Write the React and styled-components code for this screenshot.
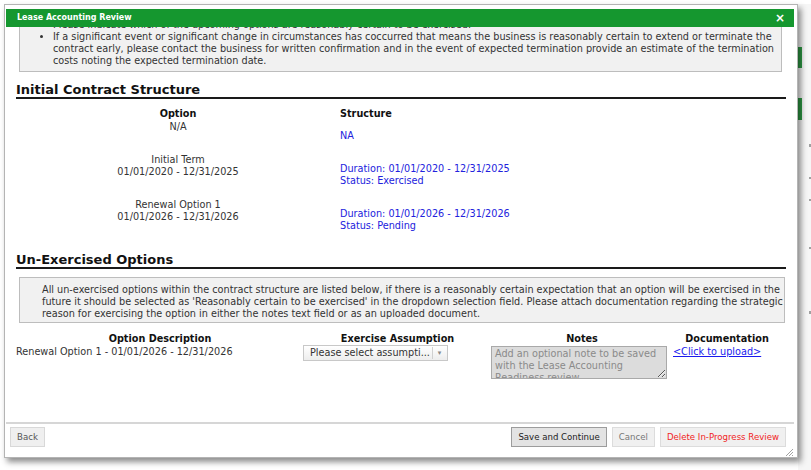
import React from "react";
import styled, { createGlobalStyle } from "styled-components";

const GlobalStyle = createGlobalStyle`
  html, body {
    margin: 0;
    padding: 0;
    background: #ffffff;
  }
  body {
    font-family: "DejaVu Sans", Verdana, sans-serif;
    font-size: 9.7px;
    line-height: 12px;
    color: #333333;
  }
`;

const contractRows = [
  { option: ["N/A"], structure: ["NA"] },
  {
    option: ["Initial Term", "01/01/2020 - 12/31/2025"],
    structure: ["Duration: 01/01/2020 - 12/31/2025", "Status: Exercised"],
  },
  {
    option: ["Renewal Option 1", "01/01/2026 - 12/31/2026"],
    structure: ["Duration: 01/01/2026 - 12/31/2026", "Status: Pending"],
  },
];

const App = () => {
  return (
    <Page>
      <GlobalStyle />
      <Dialog>
        <TitleBar>
          <TitleText>Lease Accounting Review</TitleText>
          <CloseButton>×</CloseButton>
        </TitleBar>

        <Content>
          <Scroller>
            <InfoBox>
              <BulletList>
                <li>Please indicate which of the upcoming options are reasonably certain to be exercised.</li>
                <li>
                  If a significant event or significant change in circumstances has coccurred that means the business is reasonably certain to extend or terminate the
                  <br />
                  contract early, please contact the business for written confirmation and in the event of expected termination provide an estimate of the termination
                  <br />
                  costs noting the expected termination date.
                </li>
              </BulletList>
            </InfoBox>

            <SectionHeader top={10}>Initial Contract Structure</SectionHeader>
            <StructureGrid>
              <HeadCell center>Option</HeadCell>
              <HeadCell>Structure</HeadCell>
              {contractRows.map((row, i) => (
                <React.Fragment key={i}>
                  <OptionCell>
                    {row.option.map((line) => (
                      <div key={line}>{line}</div>
                    ))}
                  </OptionCell>
                  <StructureCell>
                    {row.structure.map((line) => (
                      <div key={line}>{line}</div>
                    ))}
                  </StructureCell>
                </React.Fragment>
              ))}
            </StructureGrid>

            <SectionHeader top={9}>Un-Exercised Options</SectionHeader>
            <InfoBox plain>
              All un-exercised options within the contract structure are listed below, if there is a reasonably certain expectation that an option will be exercised in the
              <br />
              future it should be selected as 'Reasonably certain to be exercised' in the dropdown selection field. Please attach documentation regarding the strategic
              <br />
              reason for exercising the option in either the notes text field or as an uploaded document.
            </InfoBox>

            <OptionsGrid>
              <HeadCell center>Option Description</HeadCell>
              <HeadCell center>Exercise Assumption</HeadCell>
              <HeadCell center>Notes</HeadCell>
              <HeadCell center>Documentation</HeadCell>
              <Cell>Renewal Option 1 - 01/01/2026 - 12/31/2026</Cell>
              <Cell>
                <SelectBox>
                  <SelectText>Please select assumpti...</SelectText>
                  <SelectArrow>▾</SelectArrow>
                </SelectBox>
              </Cell>
              <Cell>
                <NotesArea
                  readOnly
                  placeholder="Add an optional note to be saved with the Lease Accounting Readiness review"
                />
              </Cell>
              <Cell>
                <UploadLink href="#">&lt;Click to upload&gt;</UploadLink>
              </Cell>
            </OptionsGrid>
          </Scroller>
        </Content>

        <Footer>
          <Button>Back</Button>
          <Spacer />
          <Button variant="primary">Save and Continue</Button>
          <Button variant="muted">Cancel</Button>
          <Button variant="danger">Delete In-Progress Review</Button>
          <Grip viewBox="0 0 8 8">
            <path d="M8 1 L1 8 M8 4 L4 8 M8 7 L7 8" stroke="#8a8a8a" strokeWidth="0.8" />
          </Grip>
        </Footer>
      </Dialog>

      <Backdrop>
        <BackMark green h={21} top={43} />
        <BackMark green h={22} top={30} />
        <BackMark h={3} top={24} />
        <BackMark h={2} top={30} />
        <BackMark h={2} top={20} />
        <BackMark h={2} top={46} />
        <BackMark h={3} top={62} />
      </Backdrop>
    </Page>
  );
};

const Page = styled.div`
  display: flex;
  align-items: flex-start;
  width: 811px;
  height: 470px;
  overflow: hidden;
  padding: 4px 0 0 4px;
  box-sizing: border-box;
`;

const Dialog = styled.div`
  position: relative;
  width: 794px;
  height: 454px;
  flex: none;
  box-sizing: border-box;
  display: flex;
  flex-direction: column;
  background: #ffffff;
  border: 1px solid #b4b4b4;
  padding: 4px 3px 0 1px;
  box-shadow: 3px 4px 6px rgba(0, 0, 0, 0.45);
  z-index: 1;
`;

const TitleBar = styled.div`
  height: 18px;
  flex: none;
  display: flex;
  align-items: center;
  justify-content: space-between;
  padding: 0 9px 0 11px;
  background: #15972f;
  color: #ffffff;
  position: relative;
  z-index: 2;
`;

const TitleText = styled.span`
  font-size: 8px;
  font-weight: bold;
`;

const CloseButton = styled.span`
  font-size: 12px;
  font-weight: bold;
  line-height: 12px;
`;

const Content = styled.div`
  flex: 1;
  overflow: hidden;
  padding: 0 8px 0 10px;
`;

const Scroller = styled.div`
  margin-top: -14px;
`;

const InfoBox = styled.div`
  margin: ${(props) => (props.plain ? "8px 1px 0 3px" : "0 4px 0 3px")};
  border: 1px solid #bdbdbd;
  background: #f1f1f1;
  padding: ${(props) => (props.plain ? "6px 2px 2px 22px" : "5px 0 4px 0")};
  white-space: nowrap;
`;

const BulletList = styled.ul`
  margin: 0;
  padding-left: 33px;
  list-style: disc;
`;

const SectionHeader = styled.h2`
  margin: ${(props) => props.top}px 0 0 0;
  font-size: 13px;
  line-height: 15px;
  font-weight: bold;
  color: #111111;
  border-bottom: 2px solid #1a1a1a;
`;

const StructureGrid = styled.div`
  display: grid;
  grid-template-columns: 324px 1fr;
  margin-top: 9px;
  & > div:nth-child(n + 3) {
    margin-bottom: 11px;
  }
`;

const HeadCell = styled.div`
  font-weight: bold;
  color: #111111;
  text-align: ${(props) => (props.center ? "center" : "left")};
`;

const OptionCell = styled.div`
  text-align: center;
  margin-top: 1px;
`;

const StructureCell = styled.div`
  padding-top: 10px;
  color: #2222dd;
`;

const OptionsGrid = styled.div`
  display: grid;
  grid-template-columns: 288px 187px 182px 108px;
  margin-top: 10px;
`;

const Cell = styled.div`
  padding-top: 1px;
`;

const SelectBox = styled.div`
  width: 145px;
  height: 16px;
  box-sizing: border-box;
  display: flex;
  align-items: center;
  border: 1px solid #c8c8c8;
  background: linear-gradient(#ffffff, #ededed);
  margin-top: -1px;
  margin-left: -1px;
`;

const SelectText = styled.span`
  flex: 1;
  padding-left: 6px;
  color: #333333;
  white-space: nowrap;
  overflow: hidden;
`;

const SelectArrow = styled.span`
  width: 13px;
  height: 12px;
  border-left: 1px solid #d0d0d0;
  color: #888888;
  font-size: 7px;
  line-height: 12px;
  text-align: center;
  margin-right: 1px;
`;

const NotesArea = styled.textarea`
  display: block;
  width: 176px;
  height: 33px;
  box-sizing: border-box;
  margin: 0;
  padding: 1px 3px;
  border: 1px solid #a9a9a9;
  background: #dcdcdc;
  font-family: "DejaVu Sans", Verdana, sans-serif;
  font-size: 9.7px;
  line-height: 12px;
  color: #333333;
  overflow: hidden;
  &::placeholder {
    color: #8a8a8a;
  }
`;

const UploadLink = styled.a`
  color: #1a1aee;
  text-decoration: underline;
  white-space: nowrap;
`;

const Footer = styled.div`
  position: relative;
  flex: none;
  display: flex;
  align-items: center;
  gap: 5px;
  height: 35px;
  box-sizing: border-box;
  border-top: 2px solid #d6d6d6;
  padding: 3px 8px 10px 4px;
`;

const Spacer = styled.div`
  flex: 1;
`;

const buttonColors = {
  primary: { bg: "#e3e3e3", border: "#9c9c9c", color: "#222222" },
  muted: { bg: "#f0f0f0", border: "#dcdcdc", color: "#777777" },
  danger: { bg: "#f0f0f0", border: "#dcdcdc", color: "#f01e24" },
  default: { bg: "#efefef", border: "#d8d8d8", color: "#555555" },
};

const Button = styled.button`
  height: 20px;
  padding: 0 6px;
  font-family: "DejaVu Sans", Verdana, sans-serif;
  font-size: 8.6px;
  background: ${(props) => buttonColors[props.variant || "default"].bg};
  border: 1px solid ${(props) => buttonColors[props.variant || "default"].border};
  color: ${(props) => buttonColors[props.variant || "default"].color};
  border-radius: 0;
  cursor: pointer;
`;

const Grip = styled.svg`
  position: absolute;
  right: 1px;
  bottom: 1px;
  width: 8px;
  height: 8px;
`;

const Backdrop = styled.div`
  flex: 1;
  display: flex;
  flex-direction: column;
  align-items: flex-end;
  height: 100%;
  background: #f6f6f6;
`;

const BackMark = styled.div`
  width: ${(props) => (props.green ? "4px" : "2px")};
  height: ${(props) => props.h}px;
  margin-top: ${(props) => props.top}px;
  align-self: ${(props) => (props.green ? "flex-start" : "flex-end")};
  background: ${(props) => (props.green ? "#2f9a45" : "#a0a0a0")};
`;

export default App;
